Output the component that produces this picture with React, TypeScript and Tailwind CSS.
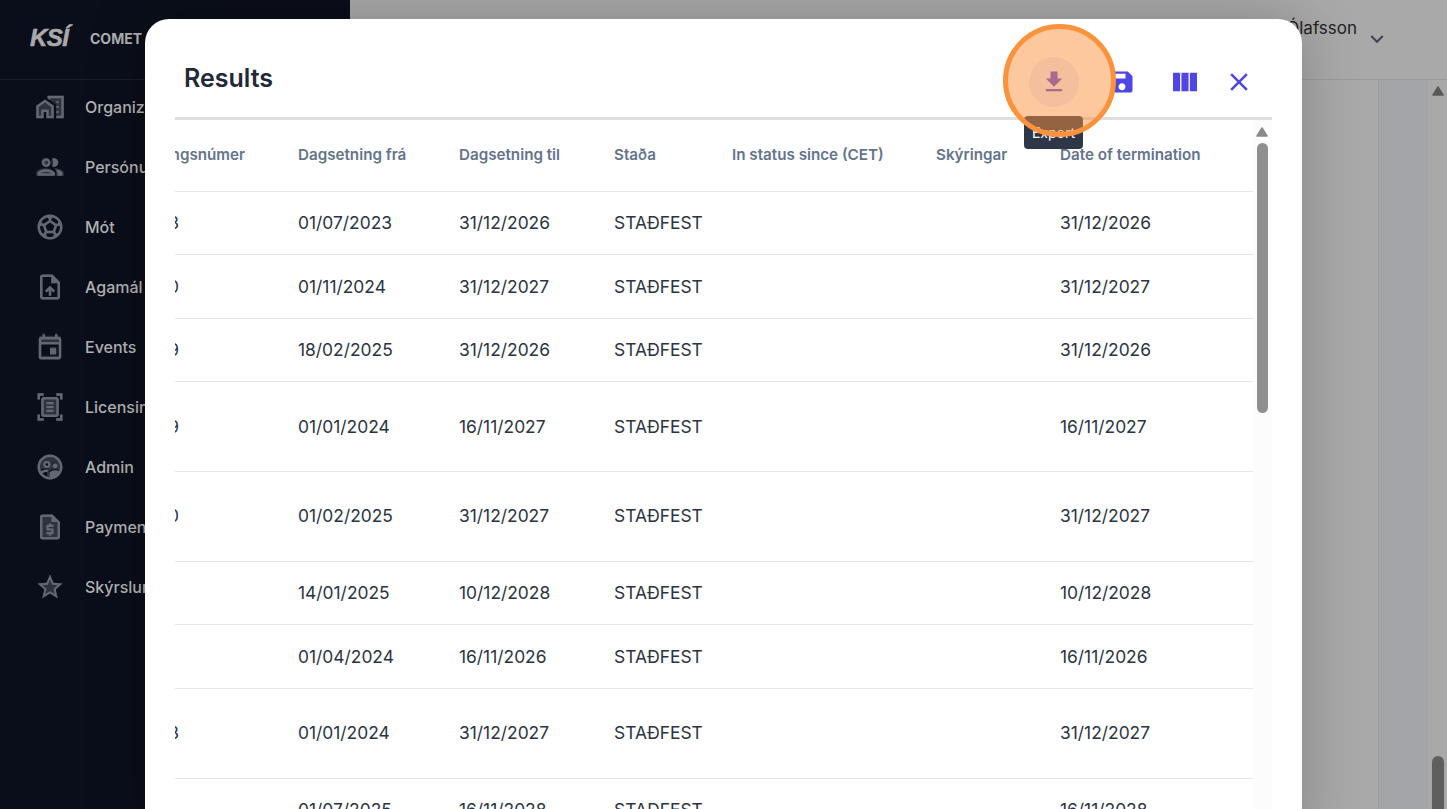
import React from "react";
import { MdOutlineHomeWork, MdHomeWork, MdOutlinePeople, MdPeople, MdOutlineSportsSoccer, MdSportsSoccer, MdOutlineUploadFile, MdUploadFile, MdOutlineEvent, MdEvent, MdOutlineDocumentScanner, MdDocumentScanner, MdOutlineSupervisedUserCircle, MdSupervisedUserCircle, MdOutlineRequestQuote, MdRequestQuote, MdStarOutline, MdStar, MdFileDownload, MdSave, MdViewColumn, MdClose, MdExpandMore } from "react-icons/md";

type I = React.ComponentType<{ className?: string }>;
const nav: [string, I, I][] = [
  ["Organization", MdOutlineHomeWork, MdHomeWork],
  ["Persónur", MdOutlinePeople, MdPeople],
  ["Mót", MdOutlineSportsSoccer, MdSportsSoccer],
  ["Agamál", MdOutlineUploadFile, MdUploadFile],
  ["Events", MdOutlineEvent, MdEvent],
  ["Licensing", MdOutlineDocumentScanner, MdDocumentScanner],
  ["Admin", MdOutlineSupervisedUserCircle, MdSupervisedUserCircle],
  ["Payments", MdOutlineRequestQuote, MdRequestQuote],
  ["Skýrslur", MdStarOutline, MdStar],
];

const rows = [
  ["8", "01/07/2023", "31/12/2026", "31/12/2026", "h-[63px]"],
  ["0", "01/11/2024", "31/12/2027", "31/12/2027", "h-[64px] pt-[1px]"],
  ["9", "18/02/2025", "31/12/2026", "31/12/2026", "h-[63px]"],
  ["9", "01/01/2024", "16/11/2027", "16/11/2027", "h-[90px] pt-[1px]"],
  ["0", "01/02/2025", "31/12/2027", "31/12/2027", "h-[90px]"],
  ["", "14/01/2025", "10/12/2028", "10/12/2028", "h-[63px]"],
  ["", "01/04/2024", "16/11/2026", "16/11/2026", "h-[64px] pt-[1px]"],
  ["8", "01/01/2024", "31/12/2027", "31/12/2027", "h-[90px]"],
  ["", "01/07/2025", "16/11/2028", "16/11/2028", "h-[63px]"],
];

function ArrowUp({ className }: { className: string }) {
  return (
    <svg viewBox="0 0 12 10" className={className}>
      <path d="M6 1 L11 9 H1 Z" fill="currentColor" stroke="currentColor" strokeWidth="1.5" strokeLinejoin="round" />
    </svg>
  );
}

export default function App() {
  return (
    <div className="relative flex h-[809px] w-[1447px] overflow-hidden bg-[#a9a9a9] font-['Inter',sans-serif]">
      <aside className="flex w-[350px] shrink-0 flex-col bg-[#0a0e1a]">
        <div className="flex h-[80px] items-center border-b border-[#1a1e2a] pl-[30px] pb-[3px]">
          <span className="w-[60px] font-['Liberation_Sans',sans-serif] text-[24px] font-bold italic tracking-[-0.5px] text-[#a9a9a9] [-webkit-text-stroke:0.6px_#a9a9a9]">KSÍ</span>
          <span className="text-[14px] font-bold text-[#b0b0b0]">COMET</span>
        </div>
        <nav className="flex flex-col">
          {nav.map(([label, Outline, Filled]) => (
            <div key={label} className="flex h-[60px] items-center pb-[6px] pl-[35px]">
              <span className="relative h-[30px] w-[30px]">
                <Filled className="absolute inset-0 h-[30px] w-[30px] text-[#626872] opacity-40" />
                <Outline className="absolute inset-0 h-[30px] w-[30px] text-[#626872]" />
              </span>
              <span className="ml-[20px] text-[16px] font-medium text-[#b2b2b2]">{label}</span>
            </div>
          ))}
        </nav>
      </aside>

      <main className="flex min-w-0 flex-1 flex-col">
        <header className="flex h-[80px] shrink-0 items-start justify-end border-b border-[#9a9a9a] pr-[90px]">
          <span className="mt-[18px] text-[17px] leading-[20px] text-[#222]">Ólafsson</span>
          <MdExpandMore className="absolute left-[1364px] top-[26px] h-[26px] w-[26px] text-[#3f4655]" />
        </header>
        <div className="flex min-h-0 flex-1">
          <div className="flex-1" />
          <div className="w-[50px] border-l border-[#9b9c9c] bg-[#a4a5a8]" />
          <div className="flex w-[19px] flex-col items-center bg-[#a9a9a9]">
            <ArrowUp className="mt-[6px] h-[10px] w-[12px] shrink-0 text-[#5a5a5a]" />
            <div className="mt-auto h-[53px] w-[12px] rounded-t-full bg-[#5f5f5f]" />
          </div>
        </div>
      </main>

      {/* Modal */}
      <div className="absolute left-[145px] top-[19px] flex h-[830px] w-[1157px] flex-col rounded-t-[24px] bg-white pl-[30px] pr-[30px] shadow-[0_0_60px_rgba(0,0,0,0.22)]">
        <div className="relative flex h-[101px] shrink-0 items-center border-b-[3px] border-[#dedede]">
          <h2 className="mt-[22px] ml-[9px] flex-1 text-[25px] font-semibold text-[#1f2937]">Results</h2>
          <div className="mt-[28px] flex h-[50px] items-center">
            <span className="flex h-[50px] w-[50px] items-center justify-center rounded-full bg-[#4f46e5]/10">
              <MdFileDownload className="h-[28px] w-[28px] text-[#4f46e5]" />
            </span>
            <MdSave className="ml-[29px] h-[28px] w-[28px] text-[#4f46e5]" />
            <MdViewColumn className="ml-[33px] h-[32px] w-[32px] text-[#4f46e5]" />
            <MdClose className="ml-[23px] mr-[18px] h-[30px] w-[30px] text-[#4f46e5]" />
          </div>
          <div className="absolute left-[849px] top-[97px] z-10 flex h-[33px] w-[59px] items-center justify-center rounded-[4px] bg-[#2d3748] text-[14px] text-white">Export</div>
        </div>

        <div className="flex min-h-0 flex-1">
          <div className="w-[1078px] shrink-0 overflow-hidden">
            <div className="flex h-[72px] items-center border-b border-[#e5e9ee] text-[15.2px] font-semibold text-[#64748b]">
              <div className="w-[123px] overflow-hidden whitespace-nowrap"><div className="flex w-[70px] justify-end">Samningsnúmer</div></div>
              <div className="w-[161px]">Dagsetning frá</div>
              <div className="w-[155px]">Dagsetning til</div>
              <div className="w-[118px]">Staða</div>
              <div className="w-[204px]">In status since (CET)</div>
              <div className="w-[124px]">Skýringar</div>
              <div>Date of termination</div>
            </div>
            {rows.map((r, i) => (
              <div key={i} className={`flex items-center border-b border-[#e5e9ee] text-[17.4px] text-[#2b3442] ${r[4]}`}>
                <div className="w-[123px] overflow-hidden whitespace-nowrap"><div className="flex w-[4px] justify-end">{r[0] && `100${r[0]}`}</div></div>
                <div className="w-[161px]">{r[1]}</div>
                <div className="w-[155px]">{r[2]}</div>
                <div className="w-[118px]">STAÐFEST</div>
                <div className="w-[328px]" />
                <div>{r[3]}</div>
              </div>
            ))}
          </div>
          <div className="relative w-[19px] bg-[#fcfcfc]">
            <ArrowUp className="absolute left-[3px] top-[7px] h-[10px] w-[12px] text-[#8a8a8a]" />
            <div className="absolute left-[4px] top-[23px] h-[270px] w-[11px] rounded-full bg-[#8f8f8f]" />
          </div>
        </div>
      </div>

      {/* Highlight marker */}
      <div className="absolute left-[1003px] top-[24px] z-20 h-[113px] w-[113px] rounded-full border-[5px] border-[#fb923c] bg-[#fb923c]/50" />
    </div>
  );
}
